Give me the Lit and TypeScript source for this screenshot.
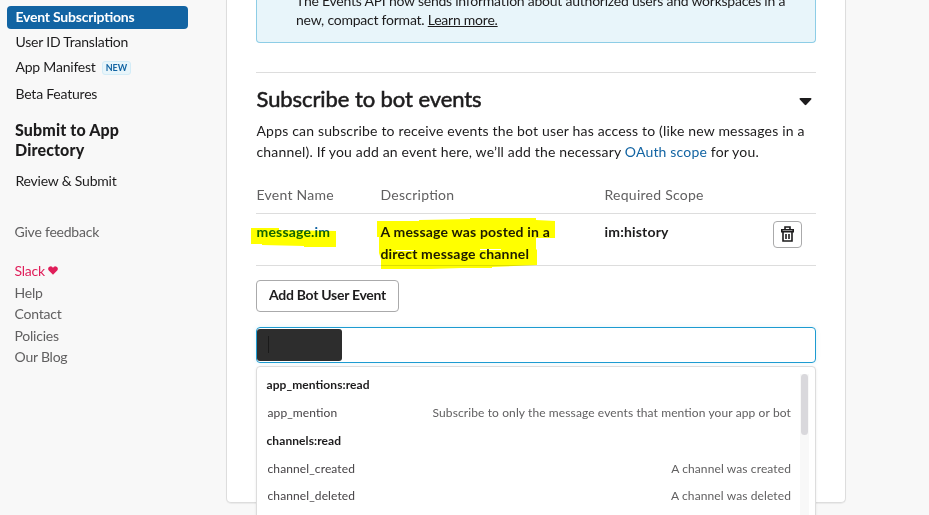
import { LitElement, html, css, svg } from "lit";
import { customElement } from "lit/decorators.js";

const options = [
  { group: "app_mentions:read", events: [["app_mention", "Subscribe to only the message events that mention your app or bot"]] },
  { group: "channels:read", events: [["channel_created", "A channel was created"], ["channel_deleted", "A channel was deleted"]] },
];

@customElement("side-nav")
class SideNav extends LitElement {
  static styles = css`
    :host { display: block; width: 226px; color: #1d1c1d; font-size: 14px; letter-spacing: -0.22px; }
    .item { display: flex; align-items: center; height: 26px; padding-left: 8.500px; margin-left: 7px; width: 172.500px; white-space: nowrap; }
    .active { height: 23px; margin: 6px 0 -1px 7px; background: #1264a3; color: #fff; font-weight: 700; border-radius: 4px; }
    .active span { letter-spacing: -0.22px; position: relative; top: -1px; }
    .badge { margin: 2px 0 0 6px; height: 12px; line-height: 12px; padding: 0 3px; border: 1px solid #d3ecf7; border-radius: 3px; background: #e8f5fa; color: #1264a3; font-size: 9px; font-weight: 700; letter-spacing: 0; }
    .manifest { height: 25px; }
    .beta { height: 28px; }
    h2 { font-size: 16px; line-height: 20px; font-weight: 900; margin: 13px 0 0 15px; width: 140px; letter-spacing: 0.13px; }
    .review { margin-top: 7px; }
    .foot { color: #616061; padding-left: 14.500px; line-height: 21.500px; }
    .feedback { margin: 28px 0 17px; }
    .love { display: flex; align-items: center; color: #e01e5a; }
    .love svg { margin: 1px 0 0 3px; }
    .love + .foot { margin-top: 0.500px; }
  `;
  render() {
    return html`
      <div class="item active"><span>Event Subscriptions</span></div>
      <div class="item user">User ID Translation</div>
      <div class="item manifest">App Manifest<span class="badge">NEW</span></div>
      <div class="item beta">Beta Features</div>
      <h2>Submit to App Directory</h2>
      <div class="item review">Review &amp; Submit</div>
      <div class="foot feedback">Give feedback</div>
      <div class="foot love">Slack
        <svg width="10" height="9" viewBox="0 0 10 9"><path fill="#e01e5a" d="M5 8.800 .8 4.600C-.5 3 .2.6 2.300.4 3.600.2 4.500 1 5 1.900 5.500 1 6.400.2 7.700.4 9.800.6 10.500 3 9.200 4.600Z"/></svg>
      </div>
      ${["Help", "Contact", "Policies", "Our Blog"].map((t) => html`<div class="foot">${t}</div>`)}
    `;
  }
}

@customElement("event-picker")
class EventPicker extends LitElement {
  static styles = css`
    :host { display: block; position: relative; }
    .field { box-sizing: border-box; height: 36px; border: 1px solid #1d9bd1; border-radius: 4px; padding: 1px 0 0; box-shadow: 0 0 5px rgba(29, 155, 209, 0.12); }
    .mask { display: flex; align-items: center; width: 85px; height: 32px; background: #2d2d2d; border-radius: 3px; box-sizing: border-box; padding-left: 11px; }
    .caret { width: 1px; height: 17px; background: #1a1a1a; margin-bottom: 1px; }
    .menu { position: absolute; top: 39px; left: 0; right: 0; height: 190px; box-sizing: border-box; border: 1px solid #dddddd; border-radius: 4px; background: #fff; padding: 4px 24px 0 9.500px; font-size: 12px; letter-spacing: 0.11px; box-shadow: 0 1px 3px rgba(0, 0, 0, 0.08); }
    .group { height: 28px; line-height: 28px; font-weight: 700; letter-spacing: 0.08px; color: #1d1c1d; }
    .option { display: flex; justify-content: space-between; height: 28px; line-height: 28px; padding-left: 1px; color: #454245; }
    .option + .option { height: 27px; line-height: 26px; }
    .desc { color: #616061; }
    .track { position: absolute; top: 7px; right: 6px; width: 9px; height: 180px; background: #f8f8f8; display: flex; justify-content: center; }
    .thumb { width: 7px; height: 61px; border-radius: 4px; background: #d9d8dc; }
  `;
  render() {
    return html`
      <div class="field"><div class="mask"><div class="caret"></div></div></div>
      <div class="menu">
        ${options.map((g) => html`
          <div class="group">${g.group}</div>
          ${g.events.map(([n, d]) => html`<div class="option"><span>${n}</span><span class="desc">${d}</span></div>`)}
        `)}
        <div class="track"><div class="thumb"></div></div>
      </div>
    `;
  }
}

@customElement("app-root")
class AppRoot extends LitElement {
  static styles = css`
    :host { display: flex; width: 929px; height: 515px; overflow: hidden; background: #f8f8f8; font-family: Lato, "Liberation Sans", sans-serif; color: #1d1c1d; font-feature-settings: "liga" 1; }
    .card { box-sizing: border-box; width: 620px; height: 503px; border: 1px solid #dddddd; border-top: 0; border-radius: 0 0 5px 5px; background: #fff; padding: 0 29px; box-shadow: 0 1px 1px rgba(0, 0, 0, 0.06); }
    .notice { box-sizing: border-box; height: 43px; overflow: hidden; display: flex; flex-direction: column; justify-content: flex-end; border: 1px solid #8dcde6; border-top: 0; border-radius: 0 0 4px 4px; background: #e8f5fa; padding: 0 0 13px 39px; font-size: 14px; line-height: 19px; letter-spacing: -0.235px; white-space: nowrap; }
    .more { text-decoration: underline; }
    .head { display: flex; align-items: center; justify-content: space-between; margin-top: 29px; border-top: 1px solid #dddddd; height: 48px; padding: 4px 4px 0 0.500px; box-sizing: border-box; }
    h1 { margin: 0; font-size: 22px; font-weight: 400; letter-spacing: -0.080px; -webkit-text-stroke: 0.550px #1d1c1d; }
    .head svg { margin-top: 6px; }
    .copy { font-size: 14px; line-height: 21px; white-space: nowrap; letter-spacing: 0.175px; padding: 0 0 1px 0.500px; }
    .link { color: #1264a3; }
    .row { display: grid; grid-template-columns: 124px 224px 168px auto; font-size: 14px; border-bottom: 1px solid #dddddd; box-sizing: border-box; letter-spacing: 0.180px; padding-left: 0.500px; }
    .labels { height: 51px; padding-top: 22px; line-height: 20px; color: #616061; letter-spacing: 0.260px; }
    .entry { position: relative; height: 52px; padding-top: 7px; line-height: 22px; font-weight: 700; }
    .marks { position: absolute; left: -6px; top: 4px; mix-blend-mode: multiply; }
    .trash { box-sizing: border-box; width: 29px; height: 27px; border: 1px solid #aaaaab; border-radius: 4px; display: grid; place-items: center; margin-left: 0.500px; }
    .trash svg { margin-bottom: 1px; }
    .add { box-sizing: border-box; width: 143px; height: 32px; margin: 14px 0 15px; border: 1px solid #aaaaab; border-radius: 4px; font-size: 14px; font-weight: 700; letter-spacing: -0.280px; line-height: 28px; text-align: center; }
  `;

  private marks() {
    return svg`<g fill="#ffff00">
      <path d="M1 10 29 10V12L86 13V29H54V28L12 27V26H1Z"/>
      <path fill-rule="evenodd" d="M127 3H169V2L220 1V0H286V2L305 3V20H286V31L287 32V47L242 49V50H212L181 51H131V41L129 35V19H127ZM146 33V32H164V33ZM230 32V31H251V32Z"/>
    </g>`;
  }

  render() {
    return html`
      <side-nav></side-nav>
      <main class="card">
        <div class="notice">
          <div class="n1">The Events API now sends information about authorized users and workspaces in a</div>
          <div class="n2">new, compact format. <span class="more">Learn more.</span></div>
        </div>
        <div class="head">
          <h1>Subscribe to bot events</h1>
          <svg width="13" height="8" viewBox="0 0 13 8"><path fill="#1d1c1d" d="M1.500 0h10c1 0 1.300.8.700 1.400L7.300 6.800a1.100 1.100 0 0 1-1.600 0L.8 1.400C.2.8.5 0 1.500 0Z"/></svg>
        </div>
        <div class="copy">
          <div class="c1">Apps can subscribe to receive events the bot user has access to (like new messages in a</div>
          <div class="c2">channel). If you add an event here, we’ll add the necessary <span class="link">OAuth scope</span> for you.</div>
        </div>
        <div class="row labels"><span>Event Name</span><span>Description</span><span>Required Scope</span></div>
        <div class="row entry">
          <span class="link">message.im</span>
          <span>A message was posted in a<br>direct message channel</span>
          <span>im:history</span>
          <span class="trash"><svg width="13" height="16" viewBox="0 0 13 16" fill="none" stroke="#1d1c1d" stroke-width="1.600"><path d="M4 3V1h5V3M.8 3.700h11.400v2H.8ZM2 5.500v9.500h9V5.500M5 8v5M8 8v5"/></svg></span>
          <svg class="marks" width="310" height="54">${this.marks()}</svg>
        </div>
        <div class="add">Add Bot User Event</div>
        <event-picker></event-picker>
      </main>
    `;
  }
}
